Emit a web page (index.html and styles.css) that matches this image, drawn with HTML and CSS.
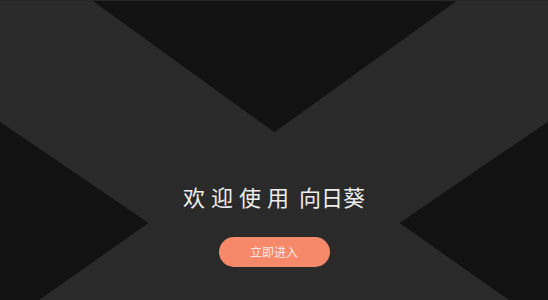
FILE: index.html
```html
<!DOCTYPE html>
<html lang="zh-CN">
<head>
<meta charset="utf-8">
<title>欢迎使用向日葵</title>
<link rel="stylesheet" href="styles.css">
</head>
<body>
<main class="stage">
  <svg class="backdrop" viewBox="0 0 548 300" preserveAspectRatio="none" aria-hidden="true">
    <rect x="0" y="0" width="548" height="300" fill="#2a2a2a"/>
    <polygon points="91.6,0 457.9,0 274.4,132.3" fill="#121212"/>
    <polygon points="0,121.7 148.5,223 39,300 0,300" fill="#121212"/>
    <polygon points="548,121.7 399.5,223 509,300 548,300" fill="#121212"/>
    <rect x="0" y="0" width="548" height="1" fill="#262626"/>
  </svg>
  <section class="welcome">
    <h1 class="title"><span class="title-lead">欢迎使用</span>向日葵</h1>
    <button class="enter" type="button">立即进入</button>
  </section>
</main>
</body>
</html>
```

FILE: styles.css
```css
html, body {
  margin: 0;
  padding: 0;
  background: #2a2a2a;
}

.stage {
  position: relative;
  width: 548px;
  height: 300px;
  overflow: hidden;
  font-family: "Noto Sans CJK SC", "Noto Sans", sans-serif;
}

.backdrop {
  position: absolute;
  inset: 0;
  width: 100%;
  height: 100%;
  display: block;
}

.welcome {
  position: relative;
  display: flex;
  flex-direction: column;
  align-items: center;
  padding-top: 181px;
}

.title {
  margin: 0;
  font-size: 22px;
  line-height: 30px;
  font-weight: 400;
  color: #ededed;
  white-space: nowrap;
}

.title-lead {
  letter-spacing: 6px;
  margin-right: 4px;
}

.enter {
  margin-top: 26px;
  width: 111px;
  height: 30px;
  border: 0;
  border-radius: 15px;
  background: #f7896b;
  color: #fbe9e3;
  font-family: "Noto Sans CJK SC", "Noto Sans", sans-serif;
  font-size: 12px;
  line-height: 30px;
  padding: 0;
}
```
